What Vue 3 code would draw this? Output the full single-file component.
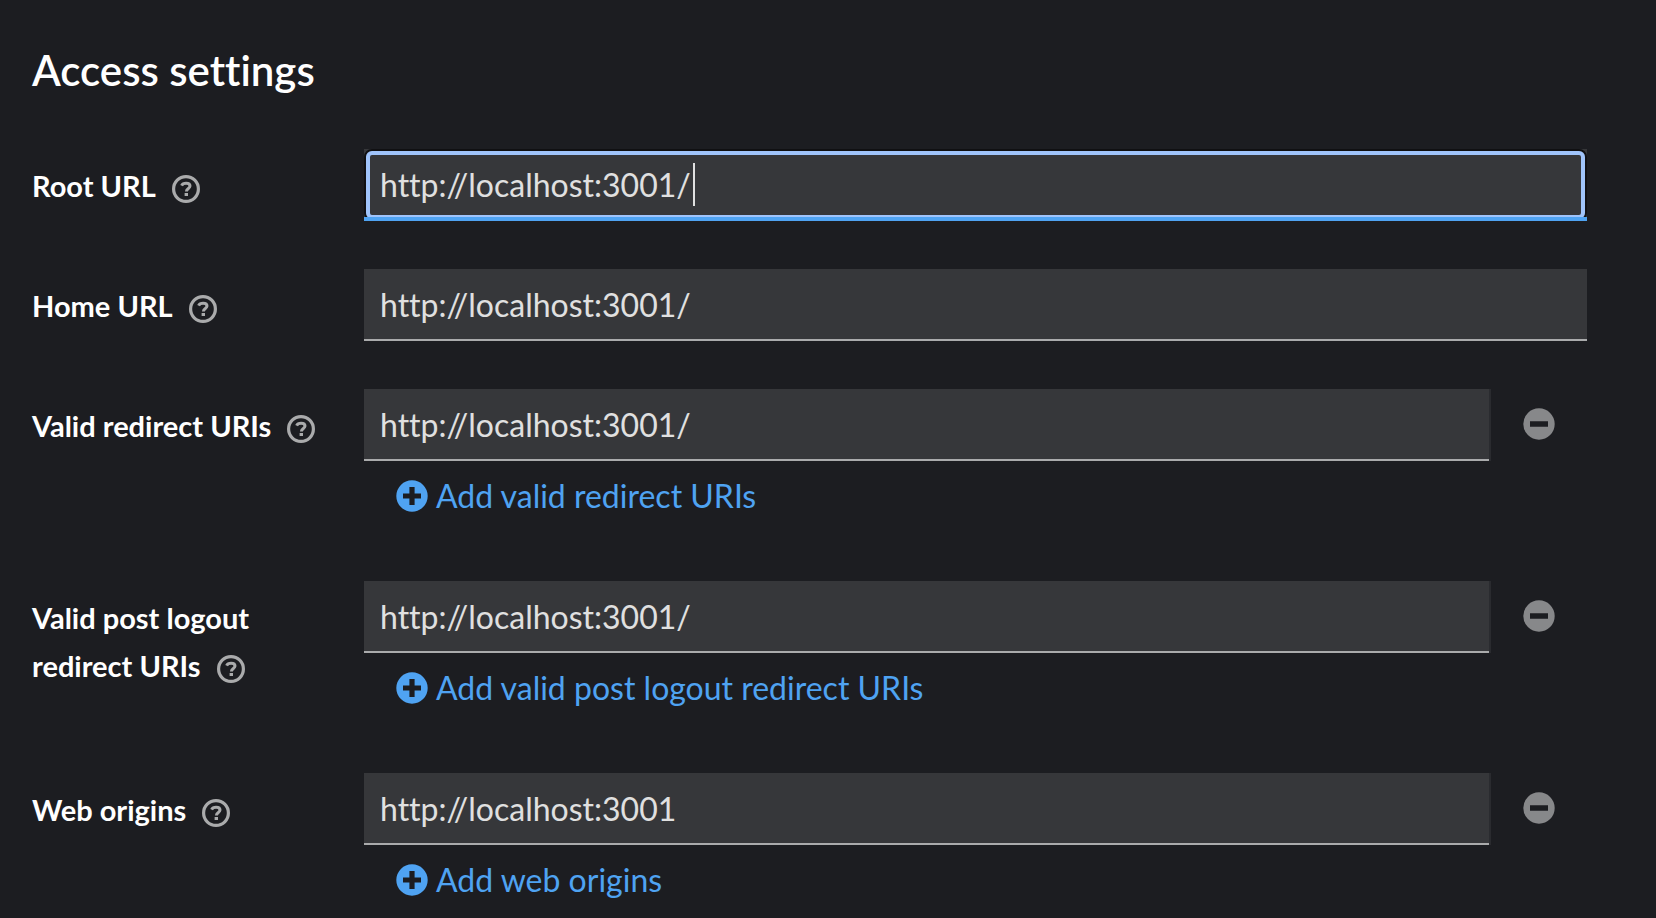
<script setup>
import { reactive } from 'vue'

const fields = reactive([
  { id: 'root-url', label: 'Root URL', value: 'http://localhost:3001/', focused: true },
  { id: 'home-url', label: 'Home URL', value: 'http://localhost:3001/' },
  { id: 'redirect-uris', label: 'Valid redirect URIs', value: 'http://localhost:3001/', add: 'Add valid redirect URIs' },
  { id: 'logout-uris', label: 'Valid post logout redirect URIs', value: 'http://localhost:3001/', add: 'Add valid post logout redirect URIs' },
  { id: 'web-origins', label: 'Web origins', value: 'http://localhost:3001', add: 'Add web origins' },
])
</script>

<template>
  <main class="page">
    <h1 class="title">Access settings</h1>
    <form class="form" @submit.prevent>
      <div v-for="field in fields" :key="field.id" class="group">
        <div class="label-cell">
          <label :for="field.id">{{ field.label }}</label>
          <button type="button" class="help" :aria-label="`Help for ${field.label}`">
            <svg viewBox="0 0 28 28" fill="none" stroke="currentColor" aria-hidden="true">
              <circle cx="14" cy="14" r="12.4" stroke-width="3.2" />
              <path d="M9.6 10.6C10.4 8.9 12 8.3 14.1 8.3C16.6 8.3 18 9.5 18 11.1C18 13.5 14.4 13.4 14.4 16.4" stroke-width="3" />
              <path d="M12.6 18h3.4v3h-3.4z" fill="currentColor" stroke="none" />
            </svg>
          </button>
        </div>
        <div class="controls">
          <div class="row">
            <div class="control" :class="{ focused: field.focused, removable: field.add }">
              <input :id="field.id" v-model="field.value" type="text" spellcheck="false" />
              <span v-if="field.focused" class="ring"></span>
              <span v-if="field.focused" class="caret"></span>
            </div>
            <button v-if="field.add" type="button" class="remove" :aria-label="`Remove from ${field.label}`" disabled>
              <svg viewBox="0 0 32 32" aria-hidden="true">
                <path fill="currentColor" fill-rule="evenodd" d="M16 0.3a15.7 15.7 0 1 0 0 31.4a15.7 15.7 0 0 0 0-31.4zM7 13.3h18v5.4H7z" />
              </svg>
            </button>
          </div>
          <button v-if="field.add" type="button" class="add">
            <svg viewBox="0 0 32 32" aria-hidden="true">
              <path fill="currentColor" fill-rule="evenodd" d="M16 0.3a15.7 15.7 0 1 0 0 31.4a15.7 15.7 0 0 0 0-31.4zM13.4 7h5.2v6.4H25v5.2h-6.4V25h-5.2v-6.4H7v-5.2h6.4z" />
            </svg>
            <span>{{ field.add }}</span>
          </button>
        </div>
      </div>
    </form>
  </main>
</template>

<style>
html,
body {
  background: #1c1d21;
}
</style>

<style scoped>
.page {
  box-sizing: border-box;
  min-height: 100vh;
  padding: 42px 69px 0 32px;
  background: #1c1d21;
  color: #fff;
  font-family: Lato, "Open Sans", sans-serif;
  font-variant-ligatures: none;
}
.title {
  margin: 0 0 51px;
  font-size: 42px;
  line-height: 56px;
  font-weight: 600;
}
.form {
  display: flex;
  flex-direction: column;
  gap: 48px;
}
.group {
  display: grid;
  grid-template-columns: 300px minmax(0, 1fr);
  column-gap: 32px;
}
.label-cell {
  padding-top: 13px;
  font-size: 29px;
  line-height: 48px;
  font-weight: 700;
}
button {
  margin: 0;
  padding: 0;
  border: 0;
  background: none;
  font: inherit;
}
svg {
  display: block;
}
.help {
  display: inline-block;
  width: 28px;
  height: 28px;
  margin-left: 16px;
  color: #aaabac;
  vertical-align: -6px;
}
.row {
  display: flex;
}
.control {
  position: relative;
  flex: 1;
  min-width: 0;
  height: 72px;
  overflow: hidden;
}
.control.removable {
  border-right: 2px solid #2a2b2f;
}
input {
  display: block;
  box-sizing: border-box;
  width: 100%;
  height: 72px;
  padding: 0 16px;
  border: 0;
  border-radius: 0;
  border-bottom: 2px solid #aaabac;
  outline: 0;
  background: #36373a;
  color: #e0e0e0;
  font: 400 32px/48px Lato, "Open Sans", sans-serif;
  font-variant-ligatures: none;
}
.focused::after {
  content: "";
  position: absolute;
  inset: auto 0 0;
  height: 4px;
  background: #4fa3f2;
}
.ring {
  position: absolute;
  inset: 0;
  border: 2px solid #101012;
  border-radius: 8px;
  pointer-events: none;
}
.ring::before {
  content: "";
  position: absolute;
  inset: 0;
  border: 4px solid #a0c4fb;
  border-radius: 6px;
}
.caret {
  position: absolute;
  top: 14px;
  left: 329px;
  width: 2px;
  height: 43px;
  background: #e0e0e0;
}
.remove {
  display: grid;
  place-items: center;
  width: 96px;
  height: 72px;
  padding-bottom: 2px;
  color: #87888a;
}
.remove svg,
.add svg {
  width: 32px;
  height: 32px;
}
.add {
  display: flex;
  align-items: center;
  gap: 8px;
  height: 72px;
  padding: 0 32px 2px;
  color: #4fa3f2;
  font-size: 32px;
  line-height: 48px;
  white-space: nowrap;
}
</style>
